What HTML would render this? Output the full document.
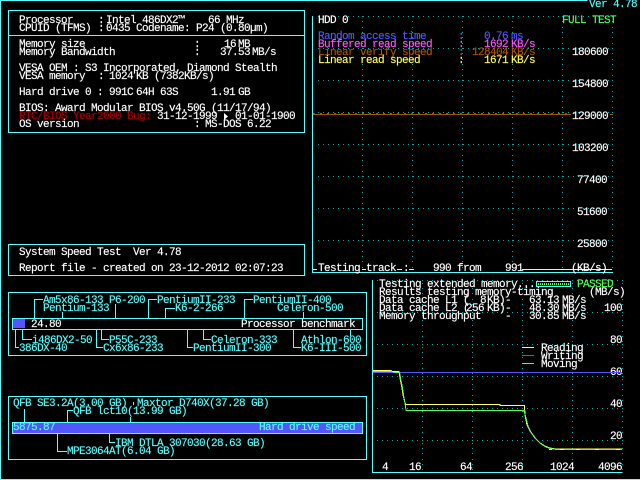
<!DOCTYPE html>
<html>
<head>
<meta charset="utf-8">
<style>
html,body{margin:0;padding:0;background:#000;width:640px;height:480px;overflow:hidden}
svg{display:block}
text{font-family:"Liberation Mono",monospace;font-size:11px;letter-spacing:-.6px;white-space:pre;color:#fff;fill:currentColor;stroke:currentColor;stroke-width:.15}
.c text{color:#55ffff}
.l{fill:none;stroke:#55ffff;stroke-width:1;shape-rendering:crispEdges}
.cv{fill:none;stroke-width:1;shape-rendering:crispEdges}
</style>
</head>
<body>
<svg width="640" height="480" viewBox="0 0 640 480" xmlns="http://www.w3.org/2000/svg">
<defs>
<pattern id="h1" x="318" y="0" width="5" height="1" patternUnits="userSpaceOnUse"><rect width="1" height="1" fill="#00aaaa"/></pattern>
<pattern id="h2" x="377" y="0" width="5" height="1" patternUnits="userSpaceOnUse"><rect width="1" height="1" fill="#00aaaa"/></pattern>
<pattern id="v" x="0" y="0" width="1" height="16" patternUnits="userSpaceOnUse"><rect y="0" width="1" height="1" fill="#00aaaa"/><rect y="5" width="1" height="1" fill="#00aaaa"/><rect y="11" width="1" height="1" fill="#00aaaa"/></pattern>
<pattern id="b" x="313" y="0" width="7" height="1" patternUnits="userSpaceOnUse"><rect width="2" height="1" fill="#aa5500"/></pattern>
</defs>
<rect width="640" height="480" fill="#000"/>
<!-- outer frame -->
<path class="l" d="M587.5 .5H.5V479.5H640"/>
<text x="589" y="7" style="color:#55ffff">Ver 4.78</text>

<!-- dotted grid, HDD -->
<g fill="url(#h1)">
<rect x="318" y="16" width="295" height="1"/><rect x="318" y="48" width="295" height="1"/><rect x="318" y="80" width="295" height="1"/><rect x="318" y="112" width="295" height="1"/><rect x="318" y="144" width="295" height="1"/><rect x="318" y="176" width="295" height="1"/><rect x="318" y="208" width="295" height="1"/><rect x="318" y="240" width="295" height="1"/>
</g>
<g fill="url(#v)">
<rect x="362" y="16" width="1" height="256"/><rect x="412" y="16" width="1" height="256"/><rect x="462" y="16" width="1" height="256"/><rect x="512" y="16" width="1" height="256"/><rect x="562" y="16" width="1" height="256"/><rect x="612" y="16" width="1" height="256"/>
</g>
<!-- dotted grid, memory -->
<g fill="url(#h2)">
<rect x="377" y="280" width="246" height="1"/><rect x="377" y="312" width="246" height="1"/><rect x="377" y="344" width="246" height="1"/><rect x="377" y="376" width="246" height="1"/><rect x="377" y="408" width="246" height="1"/><rect x="377" y="440" width="246" height="1"/>
</g>
<g fill="url(#v)">
<rect x="422" y="280" width="1" height="192"/><rect x="472" y="280" width="1" height="192"/><rect x="522" y="280" width="1" height="192"/><rect x="572" y="280" width="1" height="192"/><rect x="622" y="280" width="1" height="192"/>
</g>

<!-- top-left info -->
<path class="l" d="M8.5 10.5H304.5V132.5H8.5ZM8.5 35.5H304.5"/>
<g>
<text x="19" y="23">Processor</text><text x="98" y="23">:</text><text x="106" y="23">Intel 486DX2™</text><text x="208" y="23">66 MHz</text>
<text x="19" y="31">CPUID (TFMS)</text><text x="98" y="31">:</text><text x="106" y="31">0435 Codename: P24 (0.80µm)</text>
<text x="19" y="47">Memory size</text><text x="194" y="47">:</text><text x="224" y="47">16</text><text x="238" y="47">MB</text>
<text x="19" y="55">Memory Bandwidth</text><text x="194" y="55">:</text><text x="220" y="55">37.53</text><text x="252" y="55">MB/s</text>
<text x="19" y="71">VESA OEM : S3 Incorporated, Diamond Stealth</text>
<text x="19" y="79">VESA memory</text><text x="98" y="79">:</text><text x="109" y="79">1024</text><text x="136" y="79">KB</text><text x="154" y="79">(7382</text><text x="184" y="79">KB/s)</text>
<text x="19" y="95">Hard drive 0 :</text><text x="109" y="95">991C</text><text x="136" y="95">64H</text><text x="160" y="95">63S</text><text x="211" y="95">1.91</text><text x="238" y="95">GB</text>
<text x="19" y="111">BIOS: Award Modular BIOS v4.50G (11/17/94)</text>
<text x="19" y="119" style="color:#aa0000">RTC/BIOS Year2000 Bug:</text><text x="157" y="119">31-12-1999</text><polygon points="224,113 224,120 228,116.5" fill="#fff"/><text x="235" y="119">01-01-1900</text>
<text x="19" y="127">OS version</text><text x="194" y="127">:</text><text x="205" y="127">MS-DOS 6.22</text>
</g>

<!-- system speed box -->
<path class="l" d="M8.5 244.5H304.5V275.5H8.5Z"/>
<text x="19" y="255">System Speed Test</text><text x="133" y="255">Ver 4.78</text>
<text x="19" y="271">Report file - created on 23-12-2012 02:07:23</text>

<!-- HDD graph -->
<path class="l" d="M312.5 16V272.5H613"/>
<text x="318" y="23">HDD 0</text>
<text x="562" y="23" style="color:#55ff55">FULL TEST</text>
<text x="318" y="39" style="color:#5555ff">Random access time</text><text x="458" y="39" style="color:#5555ff">:</text><text x="484" y="39" style="color:#5555ff">0.76</text><text x="511" y="39" style="color:#5555ff">ms</text>
<text x="318" y="47" style="color:#ff55ff">Buffered read speed</text><text x="458" y="47" style="color:#ff55ff">:</text><text x="484" y="47" style="color:#ff55ff">1692</text><text x="511" y="47" style="color:#ff55ff">KB/s</text>
<text x="318" y="55" style="color:#aa5500">Linear verify speed</text><text x="458" y="55" style="color:#aa5500">:</text><text x="472" y="55" style="color:#aa5500">128404</text><text x="511" y="55" style="color:#aa5500">KB/s</text>
<text x="318" y="63" style="color:#ffff55">Linear read speed</text><text x="458" y="63" style="color:#ffff55">:</text><text x="484" y="63" style="color:#ffff55">1671</text><text x="511" y="63" style="color:#ffff55">KB/s</text>
<text x="572" y="55">180600</text>
<text x="572" y="87">154800</text>
<text x="572" y="119">129000</text>
<text x="572" y="151">103200</text>
<text x="577" y="183">77400</text>
<text x="577" y="215">51600</text>
<text x="577" y="247">25800</text>
<rect x="313" y="114" width="258" height="1" fill="#aa5500"/>
<rect x="313" y="113" width="258" height="1" fill="url(#b)"/>
<rect x="610" y="114" width="3" height="1" fill="#aa5500"/>
<path d="M313 269.5H317M362 269.5H366M397 269.5H402M409 269.5H414M522 269.5H612" stroke="#ffff55" shape-rendering="crispEdges"/>
<text x="318" y="271">Testing track</text><text x="403" y="271">:</text>
<text x="433" y="271">990 from</text><text x="505" y="271">991</text><text x="571" y="271">(KB/s)</text>

<!-- processor benchmark -->
<path class="l" d="M8.5 292.5H366.5V355.5H8.5ZM12.5 318.5H362.5V329.5H12.5Z"/>
<rect x="13" y="319" width="12" height="9" fill="#5555ff"/>
<text x="31" y="327">24.80</text><text x="241" y="327">Processor benchmark</text>
<path class="l" d="M43 299.5H34.5V318M62.5 312V318M115.5 304V318M157 299.5H148.5V318M175 308.5H165.5V318M253 299.5H244.5V318M303.5 312V318M19 347.5H15.5V329M32 339.5H22.5V329M103 347.5H96.5V329M109 339.5H101.5V329M193 347.5H187.5V329M211 339.5H203.5V329M301 347.5H293.5V329M350.5 329V336"/>
<g class="c">
<text x="43" y="303">Am5x86-133</text><text x="109" y="303">P6-200</text><text x="157" y="303">PentiumII-233</text><text x="253" y="303">PentiumII-400</text>
<text x="43" y="311">Pentium-133</text><text x="175" y="311">K6-2-266</text><text x="277" y="311">Celeron-500</text>
<text x="32" y="343">i486DX2-50</text><text x="109" y="343">P55C-233</text><text x="211" y="343">Celeron-333</text><text x="301" y="343">Athlon-600</text>
<text x="19" y="351">386DX-40</text><text x="103" y="351">Cx6x86-233</text><text x="193" y="351">PentiumII-300</text><text x="301" y="351">K6-III-500</text>
</g>

<!-- hard drive speed -->
<path class="l" d="M8.5 396.5H366.5V459.5H8.5ZM12.5 422.5H362.5V433.5H12.5Z"/>
<rect x="13" y="423" width="349" height="10" fill="#5555ff"/>
<path class="l" d="M24.5 409V422M73 410.5H67.5V422M130.5 417V422M133.5 405V402.5H134M115 442.5H109.5V433M67 451.5H57.5V433"/>
<g class="c">
<text x="13" y="430">5875.87</text><text x="259" y="430">Hard drive speed</text>
<text x="13" y="406">QFB SE3.2A(3.00 GB)</text><text x="137" y="406">Maxtor D740X(37.28 GB)</text>
<text x="73" y="414">QFB lct10(13.99 GB)</text>
<text x="115" y="446">IBM DTLA 307030(28.63 GB)</text>
<text x="67" y="454">MPE3064AT(6.04 GB)</text>
</g>

<!-- memory panel -->
<path class="l" d="M372.5 280V472.5H622.5"/>
<text x="379" y="287">Testing extended memory...</text>
<rect x="536.5" y="281.5" width="34" height="5" fill="none" stroke="#55ffff" shape-rendering="crispEdges"/>
<path d="M538 284H569" stroke="#55ff55" stroke-width="2" stroke-dasharray="1 1" shape-rendering="crispEdges"/>
<text x="577" y="287" style="color:#55ff55">PASSED</text>
<text x="379" y="295">Results testing memory-timing</text><text x="589" y="295">(MB/s)</text>
<text x="379" y="303">Data cache L1 (</text><text x="480" y="303">8</text><text x="487" y="303">KB)-</text><text x="529" y="303">63.13</text><text x="562" y="303">MB/s</text>
<text x="379" y="311">Data cache L2 (</text><text x="466" y="311">256</text><text x="487" y="311">KB)-</text><text x="529" y="311">48.30</text><text x="562" y="311">MB/s</text>
<text x="379" y="319">Memory throughput</text><text x="505" y="319">-</text><text x="529" y="319">30.85</text><text x="562" y="319">MB/s</text>
<text x="604" y="311">100</text><text x="610" y="343">80</text><text x="610" y="375">60</text><text x="610" y="407">40</text><text x="610" y="439">20</text>
<text x="541" y="351">Reading</text><text x="541" y="359">Writing</text><text x="541" y="367">Moving</text>
<path d="M522 347.5H534" stroke="#ffff55" shape-rendering="crispEdges"/>
<path d="M522 355.5H534" stroke="#5555ff" shape-rendering="crispEdges"/>
<path d="M522 363.5H534" stroke="#55ff55" shape-rendering="crispEdges"/>
<text x="382" y="470">4</text><text x="409" y="470">16</text><text x="460" y="470">64</text><text x="505" y="470">256</text><text x="550" y="470">1024</text><text x="598" y="470">4096</text>

<!-- memory curves -->
<rect x="373" y="372" width="249" height="1" fill="#5555ff"/>
<polyline class="cv" stroke="#ffff55" points="373,370.5 391,370.5 392,371.5 399,371.5 400,378 402,388 403,395 405,403 406,404.5 500,404.5 500,405.5 524.5,405.5 525,415 527,425 530,431 535,438 540,443 545,446 550,448 556,449 622,449"/>
<path d="M373 371.5H391M393 372.5H399" stroke="#55ff55" shape-rendering="crispEdges"/>
<polyline class="cv" stroke="#55ff55" points="399.5,372 400.5,378 402.5,388 403.5,395 405,403 406,410.5 524,410.5"/>
<polyline class="cv" stroke="#55ff55" points="524,411 525.5,416 528,426 531,432 536,439 541,444 546,447 552,449 558,449.5 622,449.5"/>
<path d="M549 449.5H552M560 449.5H564M576 449.5H580M595 449.5H599M616 449.5H620" stroke="#ffff55" shape-rendering="crispEdges"/>
</svg>
</body>
</html>
